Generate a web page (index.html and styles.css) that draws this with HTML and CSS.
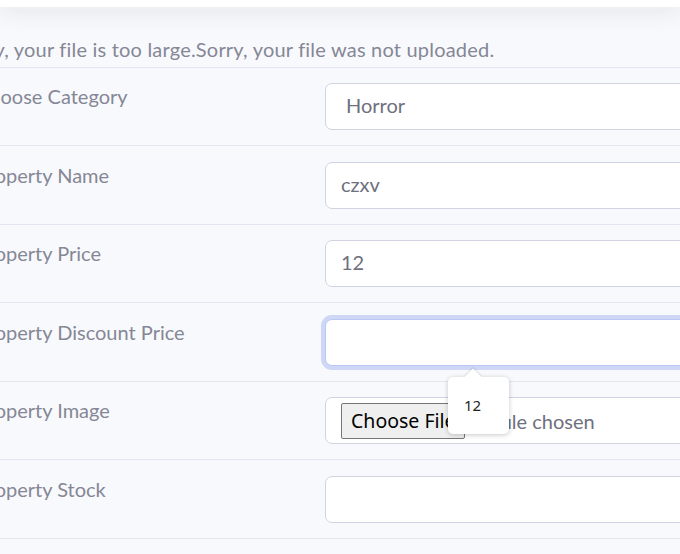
FILE: index.html
```html
<!DOCTYPE html>
<html lang="en">
<head>
<meta charset="utf-8">
<title>Add Property</title>
<link rel="stylesheet" href="styles.css">
</head>
<body>
<div class="topbar"></div>
<main class="content">
  <p class="message">Sorry, your file is too large.Sorry, your file was not uploaded.</p>
  <form class="form-list">
    <div class="row">
      <label class="label">Choose Category</label>
      <div class="field field-select">Horror</div>
    </div>
    <div class="row">
      <label class="label">Property Name</label>
      <input class="field" type="text" value="czxv">
    </div>
    <div class="row">
      <label class="label">Property Price</label>
      <input class="field" type="text" value="12">
    </div>
    <div class="row">
      <label class="label">Property Discount Price</label>
      <div class="field-wrap">
        <input class="field field-focus" type="text" value="">
        <div class="popover">12</div>
      </div>
    </div>
    <div class="row">
      <label class="label">Property Image</label>
      <div class="field field-file">
        <span class="file-btn">Choose File</span>
        <span class="file-name">No file chosen</span>
      </div>
    </div>
    <div class="row">
      <label class="label">Property Stock</label>
      <input class="field" type="text" value="">
    </div>
    <div class="row"></div>
  </form>
</main>
</body>
</html>
```
FILE: styles.css
```css
html, body {
  margin: 0;
  padding: 0;
}
body {
  background: #f8f9fc;
  font-family: "Lato", "Noto Sans", sans-serif;
  font-size: 20px;
  color: #858796;
  overflow: hidden;
  width: 680px;
  height: 554px;
}
.topbar {
  height: 7px;
  background: #fff;
  box-shadow: 0 2px 22px 0 rgba(58, 59, 69, 0.22);
  position: relative;
  z-index: 1;
}
.content {
  margin-left: -24px;
}
.message {
  margin: 28.8px 0 0 -19px;
  padding-bottom: 4.2px;
  line-height: 27px;
  letter-spacing: 0.2px;
  white-space: nowrap;
}
.form-list {
  margin: 0;
}
.row {
  display: grid;
  grid-template-columns: 349px 420px;
  align-items: start;
  border-top: 1px solid #e3e6f0;
  padding: 15.5px 0 15px;
  height: 47px;
}
.label {
  line-height: 27px;
  white-space: nowrap;
}
.field {
  box-sizing: border-box;
  height: 47px;
  width: 420px;
  margin: 0;
  border: 1px solid #d1d3e2;
  border-radius: 7px;
  background: #fff;
  padding: 0 15px 3px;
  font-family: inherit;
  font-size: 20px;
  color: #6e707e;
  outline: none;
}
.field-select {
  display: flex;
  align-items: center;
  padding-left: 20px;
}
.field-wrap {
  position: relative;
  height: 47px;
}
.field-focus {
  border-color: #bac8f3;
  box-shadow: 0 0 0 4px rgba(78, 115, 223, 0.25);
}
.field-file {
  display: flex;
  align-items: center;
  padding: 0 0 0 15px;
}
.file-btn {
  box-sizing: border-box;
  height: 36px;
  width: 124px;
  flex: none;
  display: flex;
  align-items: center;
  padding-left: 9px;
  background: #efefef;
  border: 1px solid #767676;
  border-radius: 2px;
  font-family: "Noto Sans", sans-serif;
  font-size: 19.5px;
  color: #000;
  white-space: nowrap;
  overflow: hidden;
}
.file-name {
  margin-left: 4px;
  white-space: nowrap;
}
.popover {
  position: absolute;
  left: 123px;
  top: 58px;
  width: 61px;
  height: 57px;
  box-sizing: border-box;
  padding: 18px 0 0 16px;
  background: #fff;
  border-radius: 5px;
  box-shadow: 0 1px 5px rgba(0, 0, 0, 0.22);
  font-family: "Noto Sans", sans-serif;
  font-size: 15px;
  line-height: 20px;
  color: #1f1f1f;
  z-index: 2;
}
.popover::before {
  content: "";
  position: absolute;
  left: 19px;
  top: -6px;
  width: 12px;
  height: 12px;
  background: #fff;
  transform: rotate(45deg);
  box-shadow: -1px -1px 2px rgba(0, 0, 0, 0.1);
}
```
